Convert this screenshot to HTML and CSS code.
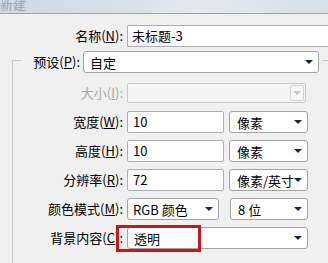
FILE: index.html
```html
<!DOCTYPE html>
<html lang="zh-CN">
<head>
<meta charset="utf-8">
<title>新建</title>
<link rel="stylesheet" href="styles.css">
</head>
<body>
<div class="titlebar"><span class="title">新建</span></div>
<div class="form">
  <div class="row name-row">
    <label class="lbl">名称(<u>N</u>):</label>
    <div class="input wide-input">未标题-3</div>
  </div>
  <div class="group">
    <div class="preset">
      <label class="lbl preset-lbl">预设(<u>P</u>):</label>
      <div class="select preset-sel"><span>自定</span><i class="arrow"></i></div>
    </div>
    <div class="rows">
      <div class="row">
        <label class="lbl disabled">大小(<u>I</u>):</label>
        <div class="select dis-sel"><span></span><b class="dis-btn"><i class="arrow light"></i></b></div>
      </div>
      <div class="row">
        <label class="lbl">宽度(<u>W</u>):</label>
        <div class="input num">10</div>
        <div class="select unit"><span>像素</span><i class="arrow"></i></div>
      </div>
      <div class="row">
        <label class="lbl">高度(<u>H</u>):</label>
        <div class="input num">10</div>
        <div class="select unit"><span>像素</span><i class="arrow"></i></div>
      </div>
      <div class="row">
        <label class="lbl">分辨率(<u>R</u>):</label>
        <div class="input num">72</div>
        <div class="select unit"><span>像素/英寸</span><i class="arrow"></i></div>
      </div>
      <div class="row">
        <label class="lbl">颜色模式(<u>M</u>):</label>
        <div class="select mode"><span>RGB 颜色</span><i class="arrow"></i></div>
        <div class="select bits"><span>8 位</span><i class="arrow"></i></div>
      </div>
      <div class="row">
        <label class="lbl">背景内容(<u>C</u>):</label>
        <div class="select bg"><span>透明</span><i class="arrow"></i></div>
      </div>
    </div>
  </div>
</div>
<div class="highlight"></div>
</body>
</html>
```
FILE: styles.css
```css
html, body {
  margin: 0;
  padding: 0;
}
body {
  width: 328px;
  height: 263px;
  overflow: hidden;
  background: #f0f0f0;
  font-family: "Noto Sans CJK SC", "Noto Sans", sans-serif;
  font-size: 13px;
  color: #000;
  position: relative;
}
u { text-decoration: underline; text-underline-offset: 1px; }

.titlebar {
  height: 13px;
  border-bottom: 1px solid #98a3ad;
  background: linear-gradient(90deg, #cfd9e3 0%, #d8e1ea 40%, #e2e9f0 60%, #d6e0e9 100%);
  overflow: hidden;
}
.title {
  display: block;
  margin-top: -6px;
  line-height: 19px;
  color: #98a4ae;
}

.form {
  padding-top: 11px;
}
.row {
  display: flex;
  align-items: center;
  height: 22px;
}
.lbl {
  flex: none;
  text-align: right;
  white-space: nowrap;
  line-height: 22px;
}
.name-row .lbl { width: 123px; margin-right: 4px; }

.input {
  box-sizing: border-box;
  height: 22px;
  background: #fff;
  border: 1px solid #abadb3;
  border-radius: 2px;
  padding-left: 4px;
  line-height: 20px;
  white-space: nowrap;
}
.wide-input { width: 201px; border-right: none; border-radius: 2px 0 0 2px; }

.group {
  box-sizing: border-box;
  margin: 13px 0 0 12px;
  border-top: 1px solid #c6cacd;
  border-left: 1px solid #c6cacd;
  height: 203px;
}
.preset {
  display: flex;
  align-items: center;
  margin: -10px 0 0 8px;
  width: 301px;
  height: 22px;
  background: #f0f0f0;
}
.preset-lbl { width: 59px; margin-right: 3px; }

.select {
  box-sizing: border-box;
  height: 22px;
  background: #fff;
  border: 1px solid #a3a3a3;
  border-radius: 3px;
  display: flex;
  align-items: center;
  justify-content: space-between;
  padding: 0 5px 0 6px;
  white-space: nowrap;
  flex: none;
}
.preset-sel { width: 236px; }
.arrow {
  display: block;
  width: 0;
  height: 0;
  border-left: 4px solid transparent;
  border-right: 4px solid transparent;
  border-top: 4px solid #15234f;
}
.arrow.light { border-top-color: #c4c4c4; }

.rows {
  margin-top: 9px;
  display: flex;
  flex-direction: column;
  gap: 7px;
}
.rows .lbl { width: 110px; margin-right: 4px; }
.disabled { color: #a7a7a7; }

.dis-sel {
  width: 179px;
  height: 20px;
  background: #f4f4f4;
  border-color: #c9c9c9;
  border-radius: 2px;
  padding: 0 1px 0 0;
}
.dis-btn {
  box-sizing: border-box;
  width: 14px;
  height: 16px;
  border: 1px solid #d2d2d2;
  border-radius: 2px;
  display: flex;
  align-items: center;
  justify-content: center;
  background: #f6f6f6;
}

.num {
  width: 97px;
  padding-left: 5px;
  flex: none;
}
.unit {
  width: 79px;
  margin-left: 5px;
  padding-left: 7px;
}
.mode { width: 92px; padding-left: 5px; }
.bits { width: 78px; margin-left: 11px; padding-left: 7px; }
.bg { width: 181px; padding-left: 6px; }

.highlight {
  position: absolute;
  left: 116px;
  top: 225px;
  width: 79px;
  height: 21px;
  border: 3px solid #c8151f;
}
```
